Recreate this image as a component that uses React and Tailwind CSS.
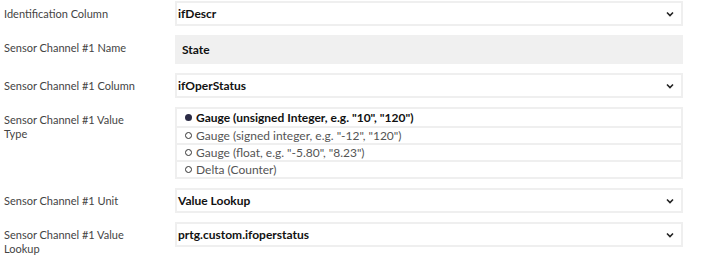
import React from "react";

const Chevron = () => (
  <svg width="8" height="6" viewBox="0 0 8 6" className="absolute right-[7px] top-1/2 -translate-y-1/2">
    <path d="M1 1.5 L4 4.5 L7 1.5" fill="none" stroke="#222" strokeWidth="1.6" />
  </svg>
);

const Label = ({ children }) => (
  <div className="w-[175px] shrink-0 pl-[4px] pt-[6px] text-[11px] leading-[14px] text-[#444] whitespace-nowrap">{children}</div>
);

const Select = ({ value }) => (
  <div className="relative w-[508px] h-[25px] border-2 border-[#efefef] bg-white flex items-center pl-[1px] text-[12px] font-bold text-[#111]">
    {value}
    <Chevron />
  </div>
);

const options = [
  'Gauge (unsigned Integer, e.g. "10", "120")',
  'Gauge (signed integer, e.g. "-12", "120")',
  'Gauge (float, e.g. "-5.80", "8.23")',
  "Delta (Counter)",
];

export default function App() {
  return (
    <div className="w-[712px] h-[258px] bg-white pt-[1px] flex flex-col gap-[9px]" style={{ fontFamily: 'Lato, "Open Sans", sans-serif' }}>
      <div className="flex">
        <Label>Identification Column</Label>
        <Select value="ifDescr" />
      </div>
      <div className="flex">
        <Label>Sensor Channel #1 Name</Label>
        <div className="w-[508px] h-[29px] bg-[#f0f0f0] flex items-center pl-[7px] text-[12px] font-bold text-[#111]">State</div>
      </div>
      <div className="flex">
        <Label>Sensor Channel #1 Column</Label>
        <Select value="ifOperStatus" />
      </div>
      <div className="flex">
        <Label>Sensor Channel #1 Value<br />Type</Label>
        <div className="w-[508px] border-2 border-[#efefef] flex flex-col">
          {options.map((o, i) => (
            <div key={i} className={`h-[17px] flex items-center pl-[8px] text-[12px] ${i > 0 ? "border-t-2 border-[#efefef]" : ""} ${i === 0 ? "font-bold text-[#111]" : "text-[#555]"}`}>
              {i === 0 ? (
                <span className="w-[7px] h-[7px] rounded-full bg-[#2b2b45] mr-[4px] shrink-0" />
              ) : (
                <span className="w-[7px] h-[7px] rounded-full border border-[#333] mr-[4px] shrink-0" />
              )}
              {o}
            </div>
          ))}
        </div>
      </div>
      <div className="flex">
        <Label>Sensor Channel #1 Unit</Label>
        <Select value="Value Lookup" />
      </div>
      <div className="flex">
        <Label>Sensor Channel #1 Value<br />Lookup</Label>
        <Select value="prtg.custom.ifoperstatus" />
      </div>
    </div>
  );
}
